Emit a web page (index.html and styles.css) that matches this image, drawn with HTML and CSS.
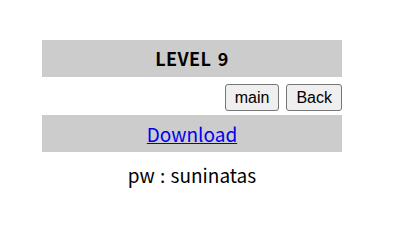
FILE: index.html
```html
<!DOCTYPE html>
<html>
<head>
<meta charset="UTF-8">
<title>LEVEL 9</title>
<link rel="stylesheet" href="styles.css">
</head>
<body>

<div class="level">
  <div class="title">LEVEL 9</div>
  <div class="buttons">
    <button type="button">main</button>
    <button type="button">Back</button>
  </div>
  <div class="download">
    <a href="#">Download</a>
  </div>
  <div class="pw">pw : suninatas</div>
</div>

</body>
</html>
```

FILE: styles.css
```css
body {
  margin: 8px;
  background: #fff;
  font-family: "Noto Sans CJK KR", "Noto Sans", sans-serif;
}

.level {
  width: 300px;
  margin: 32px 0 0 34px;
}

.title {
  background-color: #cccccc;
  height: 37px;
  line-height: 37px;
  text-align: center;
  font-size: 18px;
  font-weight: bold;
  letter-spacing: 0.4px;
  word-spacing: 2px;
}

.buttons {
  display: flex;
  justify-content: flex-end;
  gap: 7px;
  padding: 7px 0 4px 0;
}

.buttons button {
  font-family: "Liberation Sans", Arial, sans-serif;
  font-size: 16px;
  height: 27px;
  padding: 0 9px;
  background-color: #efefef;
  border: 1px solid #767676;
  border-radius: 3px;
  color: #000;
}

.download {
  background-color: #cccccc;
  height: 37px;
  line-height: 37px;
  text-align: center;
  font-size: 19px;
}

.download a {
  color: #0000ee;
}

.pw {
  text-align: center;
  font-size: 19px;
  word-spacing: 1px;
  margin-top: 9px;
}
```
